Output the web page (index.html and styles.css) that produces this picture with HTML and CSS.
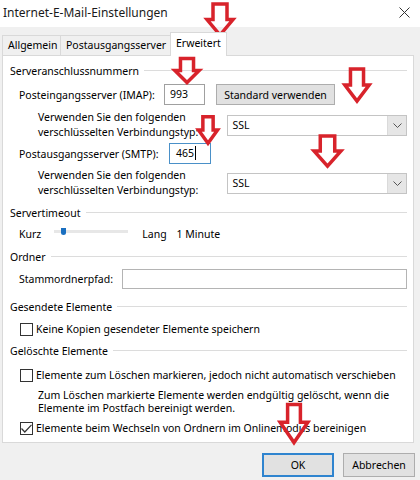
FILE: index.html
```html
<!DOCTYPE html>
<html lang="de">

<head>
  <meta charset="UTF-8">
  <meta name="viewport" content="width=device-width, initial-scale=1.0">
  <title>Internet-E-Mail-Einstellungen</title>

  <link rel="stylesheet" href="styles.css">
</head>

<body>
  <div class="dialog">
    <header class="titlebar">
      <h1>Internet-E-Mail-Einstellungen</h1>
      <svg class="close" width="11" height="11" viewBox="0 0 11 11">
        <path d="M0.5 0.5L10.5 10.5M10.5 0.5L0.5 10.5" />
      </svg>
    </header>

    <ul class="tabs">
      <li class="tab-general">Allgemein</li>
      <li class="tab-outgoing">Postausgangsserver</li>
      <li class="tab-advanced active">Erweitert</li>
    </ul>

    <div class="panel">
      <div class="legend">Serveranschlussnummern</div>

      <div class="row row-imap">
        <span class="label label-imap">Posteingangsserver (IMAP):</span>
        <div class="textbox port-imap">993</div>
        <button type="button" class="btn btn-default">Standard verwenden</button>
      </div>

      <div class="row row-enc">
        <span class="enc-label">Verwenden Sie den folgenden<br>verschlüsselten Verbindungstyp:</span>
        <div class="combo">
          <span class="combo-value">SSL</span>
          <span class="combo-arrow">
            <svg width="9" height="5" viewBox="0 0 9 5"><path d="M0.5 0.5L4.5 4.5L8.5 0.5" /></svg>
          </span>
        </div>
      </div>

      <div class="row row-smtp">
        <span class="label label-smtp">Postausgangsserver (SMTP):</span>
        <div class="textbox port-smtp focus">465<span class="caret"></span></div>
      </div>

      <div class="row row-enc row-enc2">
        <span class="enc-label">Verwenden Sie den folgenden<br>verschlüsselten Verbindungstyp:</span>
        <div class="combo">
          <span class="combo-value">SSL</span>
          <span class="combo-arrow">
            <svg width="9" height="5" viewBox="0 0 9 5"><path d="M0.5 0.5L4.5 4.5L8.5 0.5" /></svg>
          </span>
        </div>
      </div>

      <div class="legend legend-timeout">Servertimeout</div>

      <div class="row row-slider">
        <span class="slider-min">Kurz</span>
        <div class="slider">
          <span class="slider-thumb"></span>
        </div>
        <span class="slider-max">Lang</span>
        <span class="slider-value">1 Minute</span>
      </div>

      <div class="legend legend-folder">Ordner</div>

      <div class="row row-folder">
        <span class="label label-folder">Stammordnerpfad:</span>
        <div class="textbox folder-path"></div>
      </div>

      <div class="legend legend-sent">Gesendete Elemente</div>

      <label class="check check-sent">
        <span class="box"></span>
        Keine Kopien gesendeter Elemente speichern
      </label>

      <div class="legend legend-deleted">Gelöschte Elemente</div>

      <label class="check check-mark">
        <span class="box"></span>
        Elemente zum Löschen markieren, jedoch nicht automatisch verschieben
      </label>
      <p class="hint">Zum Löschen markierte Elemente werden endgültig gelöscht, wenn die<br>Elemente im Postfach bereinigt werden.</p>

      <label class="check check-purge">
        <span class="box">
          <svg width="11" height="9" viewBox="0 0 11 9"><path d="M0.5 4.5L3.8 8L10.5 0.8" /></svg>
        </span>
        Elemente beim Wechseln von Ordnern im Onlinemodus bereinigen
      </label>
    </div>

    <div class="actions">
      <button type="button" class="btn btn-ok">OK</button>
      <button type="button" class="btn btn-cancel">Abbrechen</button>
    </div>

    <!-- rote Markierungspfeile -->
    <svg class="mark mark-tab" width="30" height="35" viewBox="0 0 30 36" preserveAspectRatio="none"><polygon points="8,2 22,2 22,18 28,18 15,34 2,18 8,18" vector-effect="non-scaling-stroke" /></svg>
    <svg class="mark mark-imap" width="28" height="27" viewBox="0 0 30 36" preserveAspectRatio="none"><polygon points="8,2 22,2 22,18 28,18 15,34 2,18 8,18" vector-effect="non-scaling-stroke" /></svg>
    <svg class="mark mark-default" width="28" height="36" viewBox="0 0 30 36" preserveAspectRatio="none"><polygon points="8,2 22,2 22,18 28,18 15,34 2,18 8,18" vector-effect="non-scaling-stroke" /></svg>
    <svg class="mark mark-smtp" width="22" height="30" viewBox="0 0 30 36" preserveAspectRatio="none"><polygon points="8,2 22,2 22,18 28,18 15,34 2,18 8,18" vector-effect="non-scaling-stroke" /></svg>
    <svg class="mark mark-ssl" width="31" height="34" viewBox="0 0 30 36" preserveAspectRatio="none"><polygon points="8,2 22,2 22,18 28,18 15,34 2,18 8,18" vector-effect="non-scaling-stroke" /></svg>
    <svg class="mark mark-ok" width="32" height="43" viewBox="0 0 30 36" preserveAspectRatio="none"><polygon points="9,2 21,2 21,17 28,17 15,34 2,17 9,17" vector-effect="non-scaling-stroke" /></svg>
  </div>
</body>

</html>
```

FILE: styles.css
```css
* {
  box-sizing: border-box;
}

body {
  margin: 0;
  font-family: "Noto Sans", "Segoe UI", sans-serif;
  font-size: 10.5px;
  color: #000;
}

.dialog {
  position: relative;
  width: 420px;
  height: 480px;
  background: #f0f0f0;
  overflow: hidden;
}

/* Titelleiste */
.titlebar {
  display: flex;
  align-items: center;
  justify-content: space-between;
  height: 27px;
  padding: 0 10px 2px 3px;
  background: #fff;
}

.titlebar h1 {
  margin: 0;
  font-size: 12px;
  font-weight: normal;
  color: #1a1a1a;
}

.close path {
  fill: none;
  stroke: #333;
  stroke-width: 1;
}

/* Reiter */
.tabs {
  display: flex;
  align-items: flex-end;
  height: 22px;
  margin: 6px 0 0;
  padding: 0 0 0 2px;
  list-style: none;
}

.tabs li {
  height: 20px;
  padding-left: 5px;
  line-height: 19px;
  border: 1px solid #d9d9d9;
  border-bottom: 0;
  margin-right: -1px;
  background: #f0f0f0;
}

.tabs .tab-general {
  width: 59px;
}

.tabs .tab-outgoing {
  width: 111px;
}

.tabs .tab-advanced {
  width: 57px;
}

.tabs li.active {
  position: relative;
  z-index: 1;
  height: 24px;
  margin-bottom: -1px;
  line-height: 20px;
  background: #fff;
}

/* Inhalt */
.panel {
  height: 388px;
  margin: 0 6px 0 2px;
  padding: 8px 6px 0 7px;
  border: 1px solid #d9d9d9;
  background: #fff;
}

.legend {
  display: flex;
  align-items: center;
  gap: 5px;
  height: 14px;
  line-height: 14px;
}

.legend::after {
  content: '';
  flex: 1;
  height: 1px;
  margin-top: -1px;
  background: #dcdcdc;
}

.legend-timeout {
  margin-top: 8px;
}

.legend-folder {
  margin-top: 9px;
}

.legend-sent {
  margin-top: 11px;
}

.legend-deleted {
  margin-top: 8px;
}

.row {
  display: flex;
  align-items: center;
  padding-left: 9px;
}

.label-imap {
  width: 145px;
}

.label-smtp {
  width: 150px;
}

.label-folder {
  width: 103px;
}

.row-imap {
  margin-top: 6px;
}

.row-enc {
  margin-top: 5px;
}

.row-smtp {
  margin-top: 3px;
}

.row-enc2 {
  margin-top: 4px;
}

.row-slider {
  margin-top: 7px;
  height: 14px;
}

.row-folder {
  margin-top: 5px;
}

.textbox {
  height: 21px;
  padding: 0 5px;
  line-height: 19px;
  border: 1px solid #a0a0a0;
  background: #fff;
}

.port-imap {
  width: 41px;
}

.port-smtp {
  width: 42px;
  padding-left: 6px;
}

.textbox.focus {
  border-color: #4a90c8;
}

.caret {
  display: inline-block;
  width: 1px;
  height: 14px;
  margin-left: 1px;
  vertical-align: -3px;
  background: #000;
}

.folder-path {
  flex: 1;
  height: 20px;
  border-color: #b4b4b4;
}

.enc-label {
  width: 190px;
  margin-left: 19px;
  line-height: 15px;
}

.combo {
  display: flex;
  width: 180px;
  height: 21px;
  border: 1px solid #c4c4c4;
  background: #fff;
}

.combo-value {
  flex: 1;
  padding-left: 4px;
  line-height: 19px;
}

.combo-arrow {
  display: flex;
  align-items: center;
  justify-content: center;
  width: 19px;
  border-left: 1px solid #dadada;
  background: #e6e6e6;
}

.combo-arrow path {
  fill: none;
  stroke: #555;
  stroke-width: 1;
}

/* Regler */
.slider {
  position: relative;
  width: 74px;
  height: 3px;
  margin: -6px 0 0 13px;
  background: #e7e7e7;
}

.slider-thumb {
  position: absolute;
  left: 7px;
  top: -2px;
  width: 5px;
  height: 7px;
  border-radius: 0 0 3px 3px;
  background: #1a6fc0;
}

.slider-max {
  margin-left: 14px;
}

.slider-value {
  margin-left: 10px;
}

/* Kontrollkästchen */
.check {
  display: flex;
  align-items: center;
  gap: 3px;
  height: 14px;
  padding-left: 10px;
}

.check .box {
  display: flex;
  align-items: center;
  justify-content: center;
  width: 13px;
  height: 13px;
  border: 1px solid #333;
  background: #fff;
}

.check .box path {
  fill: none;
  stroke: #333;
  stroke-width: 1.2;
}

.check-sent {
  margin-top: 8px;
}

.check-mark {
  margin-top: 10px;
}

.check-purge {
  margin-top: 6px;
}

.hint {
  margin: 7px 0 0;
  padding-left: 28px;
  line-height: 13px;
}

/* Schaltflächen */
.btn {
  font-family: inherit;
  font-size: 10.5px;
  color: #000;
  border: 1px solid #adadad;
  background: #e1e1e1;
}

.btn-default {
  width: 119px;
  height: 21px;
  margin-left: 11px;
  padding: 0;
}

.actions {
  display: flex;
  justify-content: flex-end;
  gap: 9px;
  padding: 10px 5px 0 0;
}

.btn-ok,
.btn-cancel {
  width: 72px;
  height: 24px;
  padding: 0;
}

.btn-ok {
  border: 2px solid #2f84cf;
}

/* rote Pfeile */
.mark {
  position: absolute;
  overflow: visible;
}

.mark polygon {
  fill: none;
  stroke: #d8232b;
  stroke-width: 3.5;
  stroke-linejoin: miter;
}

.mark-tab {
  left: 205px;
  top: 2px;
}

.mark-imap {
  left: 173px;
  top: 57px;
}

.mark-default {
  left: 343px;
  top: 67px;
}

.mark-smtp {
  left: 197px;
  top: 115px;
}

.mark-ssl {
  left: 312px;
  top: 134px;
}

.mark-ok {
  left: 278px;
  top: 402px;
}
```
